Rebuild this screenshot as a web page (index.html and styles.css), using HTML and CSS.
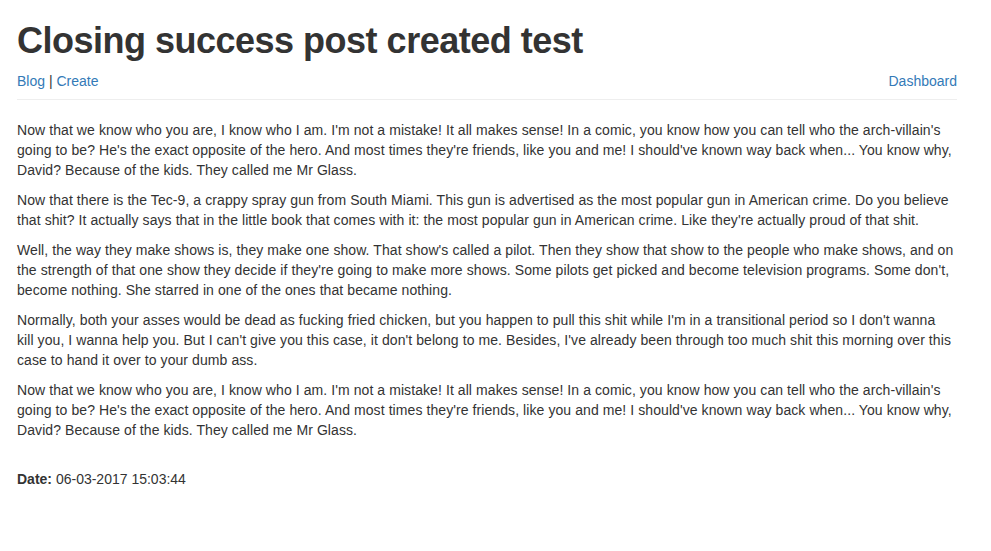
FILE: index.html
```html
<!DOCTYPE html>
<html>
<head>
<meta charset="utf-8">
<link rel="stylesheet" href="styles.css">
</head>
<body>
<div class="container">
  <h1 class="title">Closing success post created test</h1>
  <div class="nav">
    <div class="nav-left"><a href="#">Blog</a> | <a href="#">Create</a></div>
    <div class="nav-right"><a href="#">Dashboard</a></div>
  </div>
  <hr class="rule">
  <div class="post">
    <p>Now that we know who you are, I know who I am. I'm not a mistake! It all makes sense! In a comic, you know how you can tell who the arch-villain's going to be? He's the exact opposite of the hero. And most times they're friends, like you and me! I should've known way back when... You know why, David? Because of the kids. They called me Mr Glass.</p>
    <p>Now that there is the Tec-9, a crappy spray gun from South Miami. This gun is advertised as the most popular gun in American crime. Do you believe that shit? It actually says that in the little book that comes with it: the most popular gun in American crime. Like they're actually proud of that shit.</p>
    <p>Well, the way they make shows is, they make one show. That show's called a pilot. Then they show that show to the people who make shows, and on the strength of that one show they decide if they're going to make more shows. Some pilots get picked and become television programs. Some don't, become nothing. She starred in one of the ones that became nothing.</p>
    <p>Normally, both your asses would be dead as fucking fried chicken, but you happen to pull this shit while I'm in a transitional period so I don't wanna kill&nbsp;you, I wanna help you. But I can't give you this case, it don't belong to me. Besides, I've already been through too much shit this morning over this case to hand it over to your dumb ass.</p>
    <p>Now that we know who you are, I know who I am. I'm not a mistake! It all makes sense! In a comic, you know how you can tell who the arch-villain's going to be? He's the exact opposite of the hero. And most times they're friends, like you and me! I should've known way back when... You know why, David? Because of the kids. They called me Mr Glass.</p>
  </div>
  <p class="date"><strong>Date:</strong> 06-03-2017 15:03:44</p>
</div>
</body>
</html>
```
FILE: styles.css
```css
html, body {
  margin: 0;
  padding: 0;
  background: #fff;
}
body {
  font-family: "Liberation Sans", Arial, sans-serif;
  font-size: 14px;
  line-height: 20px;
  color: #333;
}
.container {
  width: 940px;
  padding-left: 17px;
}
.title {
  font-size: 36px;
  font-weight: bold;
  line-height: 39.6px;
  letter-spacing: -0.5px;
  margin: 21px 0 10px;
  color: #333;
}
.nav {
  display: flex;
  justify-content: space-between;
}
a {
  color: #337ab7;
  text-decoration: none;
}
.post {
  letter-spacing: 0.08px;
}
.rule {
  border: 0;
  border-top: 1px solid #eee;
  margin: 8px 0 20px;
  height: 0;
}
.post p {
  margin: 0 0 10px;
}
.date {
  margin: 29px 0 10px;
}
.date strong {
  font-weight: bold;
}
```
